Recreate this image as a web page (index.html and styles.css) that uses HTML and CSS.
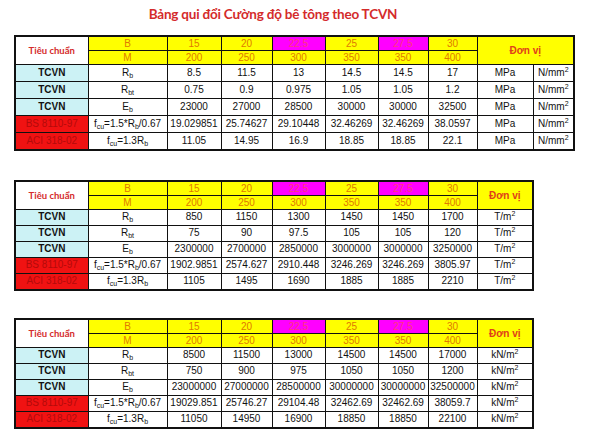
FILE: index.html
```html
<!DOCTYPE html>
<html lang="vi">
<head>
<meta charset="utf-8">
<title>Bảng qui đổi Cường độ bê tông theo TCVN</title>
<link rel="stylesheet" href="styles.css">
</head>
<body>
<main class="page">
  <h1 class="title">Bảng qui đổi Cường độ bê tông theo TCVN</h1>

  <table class="conv t1">
    <colgroup>
      <col class="c-std"><col class="c-sym"><col class="c-15"><col class="c-20"><col class="c-225"><col class="c-25"><col class="c-275"><col class="c-30"><col class="c-u1"><col class="c-u2">
    </colgroup>
    <tr class="hd">
      <td rowspan="2" class="std-h">Tiêu chuẩn</td>
      <td class="y">B</td><td class="y">15</td><td class="y">20</td><td class="m">22.5</td><td class="y">25</td><td class="m">27.5</td><td class="y">30</td>
      <td rowspan="2" colspan="2" class="unit-h">Đơn vị</td>
    </tr>
    <tr class="hd">
      <td class="y">M</td><td class="y">200</td><td class="y">250</td><td class="y">300</td><td class="y">350</td><td class="y">350</td><td class="y">400</td>
    </tr>
    <tr><td class="tc">TCVN</td><td>R<sub>b</sub></td><td>8.5</td><td>11.5</td><td>13</td><td>14.5</td><td>14.5</td><td>17</td><td>MPa</td><td>N/mm<sup>2</sup></td></tr>
    <tr><td class="tc">TCVN</td><td>R<sub>bt</sub></td><td>0.75</td><td>0.9</td><td>0.975</td><td>1.05</td><td>1.05</td><td>1.2</td><td>MPa</td><td>N/mm<sup>2</sup></td></tr>
    <tr><td class="tc">TCVN</td><td>E<sub>b</sub></td><td>23000</td><td>27000</td><td>28500</td><td>30000</td><td>30000</td><td>32500</td><td>MPa</td><td>N/mm<sup>2</sup></td></tr>
    <tr><td class="rd">BS 8110-97</td><td>f<sub>cu</sub>=1.5*R<sub>b</sub>/0.67</td><td>19.029851</td><td>25.74627</td><td>29.10448</td><td>32.46269</td><td>32.46269</td><td>38.0597</td><td>MPa</td><td>N/mm<sup>2</sup></td></tr>
    <tr><td class="rd">ACI 318-02</td><td>f<sub>cu</sub>=1.3R<sub>b</sub></td><td>11.05</td><td>14.95</td><td>16.9</td><td>18.85</td><td>18.85</td><td>22.1</td><td>MPa</td><td>N/mm<sup>2</sup></td></tr>
  </table>

  <table class="conv t2">
    <colgroup>
      <col class="c-std"><col class="c-sym"><col class="c-15"><col class="c-20"><col class="c-225"><col class="c-25"><col class="c-275"><col class="c-30"><col class="c-u1">
    </colgroup>
    <tr class="hd">
      <td rowspan="2" class="std-h">Tiêu chuẩn</td>
      <td class="y">B</td><td class="y">15</td><td class="y">20</td><td class="m">22.5</td><td class="y">25</td><td class="m">27.5</td><td class="y">30</td>
      <td rowspan="2" class="unit-h">Đơn vị</td>
    </tr>
    <tr class="hd">
      <td class="y">M</td><td class="y">200</td><td class="y">250</td><td class="y">300</td><td class="y">350</td><td class="y">350</td><td class="y">400</td>
    </tr>
    <tr><td class="tc">TCVN</td><td>R<sub>b</sub></td><td>850</td><td>1150</td><td>1300</td><td>1450</td><td>1450</td><td>1700</td><td>T/m<sup>2</sup></td></tr>
    <tr><td class="tc">TCVN</td><td>R<sub>bt</sub></td><td>75</td><td>90</td><td>97.5</td><td>105</td><td>105</td><td>120</td><td>T/m<sup>2</sup></td></tr>
    <tr><td class="tc">TCVN</td><td>E<sub>b</sub></td><td>2300000</td><td>2700000</td><td>2850000</td><td>3000000</td><td>3000000</td><td>3250000</td><td>T/m<sup>2</sup></td></tr>
    <tr><td class="rd">BS 8110-97</td><td>f<sub>cu</sub>=1.5*R<sub>b</sub>/0.67</td><td>1902.9851</td><td>2574.627</td><td>2910.448</td><td>3246.269</td><td>3246.269</td><td>3805.97</td><td>T/m<sup>2</sup></td></tr>
    <tr><td class="rd">ACI 318-02</td><td>f<sub>cu</sub>=1.3R<sub>b</sub></td><td>1105</td><td>1495</td><td>1690</td><td>1885</td><td>1885</td><td>2210</td><td>T/m<sup>2</sup></td></tr>
  </table>

  <table class="conv t3">
    <colgroup>
      <col class="c-std"><col class="c-sym"><col class="c-15"><col class="c-20"><col class="c-225"><col class="c-25"><col class="c-275"><col class="c-30"><col class="c-u1">
    </colgroup>
    <tr class="hd">
      <td rowspan="2" class="std-h">Tiêu chuẩn</td>
      <td class="y">B</td><td class="y">15</td><td class="y">20</td><td class="m">22.5</td><td class="y">25</td><td class="m">27.5</td><td class="y">30</td>
      <td rowspan="2" class="unit-h">Đơn vị</td>
    </tr>
    <tr class="hd">
      <td class="y">M</td><td class="y">200</td><td class="y">250</td><td class="y">300</td><td class="y">350</td><td class="y">350</td><td class="y">400</td>
    </tr>
    <tr><td class="tc">TCVN</td><td>R<sub>b</sub></td><td>8500</td><td>11500</td><td>13000</td><td>14500</td><td>14500</td><td>17000</td><td>kN/m<sup>2</sup></td></tr>
    <tr><td class="tc">TCVN</td><td>R<sub>bt</sub></td><td>750</td><td>900</td><td>975</td><td>1050</td><td>1050</td><td>1200</td><td>kN/m<sup>2</sup></td></tr>
    <tr><td class="tc">TCVN</td><td>E<sub>b</sub></td><td>23000000</td><td>27000000</td><td>28500000</td><td>30000000</td><td>30000000</td><td>32500000</td><td>kN/m<sup>2</sup></td></tr>
    <tr><td class="rd">BS 8110-97</td><td>f<sub>cu</sub>=1.5*R<sub>b</sub>/0.67</td><td>19029.851</td><td>25746.27</td><td>29104.48</td><td>32462.69</td><td>32462.69</td><td>38059.7</td><td>kN/m<sup>2</sup></td></tr>
    <tr><td class="rd">ACI 318-02</td><td>f<sub>cu</sub>=1.3R<sub>b</sub></td><td>11050</td><td>14950</td><td>16900</td><td>18850</td><td>18850</td><td>22100</td><td>kN/m<sup>2</sup></td></tr>
  </table>
</main>
</body>
</html>
```
FILE: styles.css
```css
html, body {
  margin: 0;
  padding: 0;
  background: #ffffff;
}

.page {
  display: flex;
  flex-direction: column;
  align-items: flex-start;
  padding-top: 4px;
  font-family: "Liberation Sans", Arial, sans-serif;
  color: #111;
}

.title {
  width: 546px;
  margin: 0;
  text-align: center;
  font-family: Lato, "Open Sans", sans-serif;
  font-weight: 700;
  font-size: 13.5px;
  letter-spacing: -0.2px;
  line-height: 20px;
  color: #d42b2b;
}

.conv {
  margin-left: 14px;
  border-collapse: collapse;
  table-layout: fixed;
  border: 2px solid #111;
  font-size: 10px;
}

.t1 { margin-top: 11px; width: 559px; }
.t2 { margin-top: 29px; width: 518px; }
.t3 { margin-top: 27px; width: 518px; }

.c-std { width: 73px; }
.c-sym { width: 79px; }
.c-15 { width: 54px; }
.c-20 { width: 51px; }
.c-225 { width: 53px; }
.c-25 { width: 53px; }
.c-275 { width: 50px; }
.c-30 { width: 49px; }
.c-u1 { width: 56px; }
.c-u2 { width: 41px; }

.conv td {
  border: 1px solid #111;
  padding: 0 0 1px;
  height: 15px;
  text-align: center;
  vertical-align: middle;
  white-space: nowrap;
  line-height: 12px;
  background: #fff;
}

.t2 td, .t3 td {
  height: 14px;
}

.conv tr.hd td {
  height: 13px;
  padding: 0;
  line-height: 11px;
}

.conv td.y {
  background: #ffff00;
  color: #e07a00;
}

.conv td.m {
  background: #ff00ff;
  color: #ff3a7a;
}

.conv td.std-h {
  font-family: Lato, "Open Sans", sans-serif;
  font-weight: 700;
  font-size: 9.5px;
  color: #d42b2b;
  background: #fff;
}

.conv td.unit-h {
  background: #ffff00;
  font-weight: 700;
  color: #e0401a;
}

.conv td.tc {
  background: #ccf2f5;
  font-weight: 700;
}

.conv td.rd {
  background: #f01212;
  color: #b40a0a;
}

.conv sub {
  font-size: 7px;
  vertical-align: -2px;
  line-height: 0;
}

.conv sup {
  font-size: 7px;
  vertical-align: 4px;
  line-height: 0;
}
```
